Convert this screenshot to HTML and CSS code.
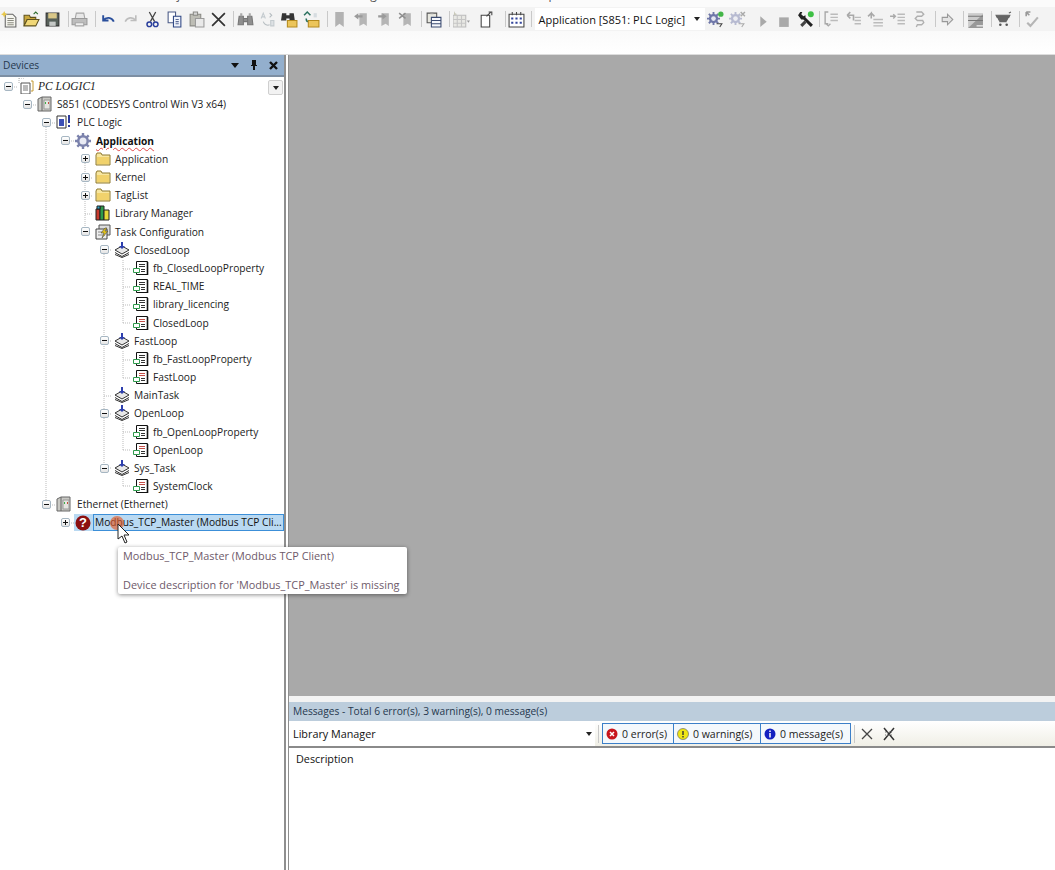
FILE: index.html
```html
<!DOCTYPE html>
<html>

<head>
    <meta charset="utf-8" />
    <title>CODESYS</title>
    <link rel="stylesheet" href="styles.css">
</head>

<body>
    <!-- icon set -->
    <svg class="defs" width="0" height="0">
        <defs>
            <symbol id="i-new" viewBox="0 0 16 16">
                <path d="M4 3h7l3 3v9H4z" fill="#f4f4ee" stroke="#666" />
                <path d="M6 7h6M6 9h6M6 11h6M6 13h6" stroke="#8a8a80" />
                <path d="M3 0l1 2 2 1-2 1-1 2-1-2-2-1 2-1z" fill="#e8c84a" />
            </symbol>
            <symbol id="i-open" viewBox="0 0 16 16">
                <path d="M1 4h5l1 2h5v2H4L1 14z" fill="#c9a73c" stroke="#5f5320" />
                <path d="M4 8h11l-3 6H1z" fill="#f0d777" stroke="#5f5320" />
                <path d="M10 3l2-2 2 2" fill="none" stroke="#2c6b2c" />
            </symbol>
            <symbol id="i-save" viewBox="0 0 16 16">
                <path d="M2 2h12v12H2z" fill="#57605a" stroke="#333" />
                <path d="M4 2h8v5H4z" fill="#d9c788" />
                <path d="M5 10h6v4H5z" fill="#c5c8c6" />
            </symbol>
            <symbol id="i-print" viewBox="0 0 16 16">
                <path d="M5 2h7l1 5H4z" fill="#e8e8e8" stroke="#a5a5a5" />
                <path d="M1 7h14v6H1z" fill="#bdbdbd" stroke="#999" />
                <path d="M4 11h8v3H4z" fill="#eee" stroke="#a5a5a5" />
            </symbol>
            <symbol id="i-undo" viewBox="0 0 16 16">
                <path d="M3 4v5h5M3 9c3-4 8-3 10 1" fill="none" stroke="#2a4f9c" stroke-width="1.800" />
            </symbol>
            <symbol id="i-redo" viewBox="0 0 16 16">
                <path d="M13 4v5H8M13 9c-3-4-8-3-10 1" fill="none" stroke="#bdbdbd" stroke-width="1.500" />
            </symbol>
            <symbol id="i-cut" viewBox="0 0 16 16">
                <path d="M5 1l5 9M11 1l-5 9" stroke="#444" stroke-width="1.200" />
                <circle cx="5" cy="12.500" r="2.200" fill="none" stroke="#2a3f9c" stroke-width="1.400" />
                <circle cx="11" cy="12.500" r="2.200" fill="none" stroke="#2a3f9c" stroke-width="1.400" />
            </symbol>
            <symbol id="i-copy" viewBox="0 0 16 16">
                <path d="M2 1h7v10H2z" fill="#fff" stroke="#4a5a86" />
                <path d="M7 5h7v10H7z" fill="#eef2fa" stroke="#2f4784" />
                <path d="M9 8h3M9 10h3M9 12h3" stroke="#5a6a96" />
            </symbol>
            <symbol id="i-paste" viewBox="0 0 16 16">
                <path d="M2 3h10v11H2z" fill="#bdbdb5" stroke="#8a8a85" />
                <path d="M5 1h4v3H5z" fill="#d5d5d5" stroke="#8a8a85" />
                <path d="M7 7h8v8H7z" fill="#e9e9e9" stroke="#9a9a9a" />
            </symbol>
            <symbol id="i-del" viewBox="0 0 16 16">
                <path d="M2 2l12 12M14 2L2 14" stroke="#333" stroke-width="1.600" />
            </symbol>
            <symbol id="i-find" viewBox="0 0 16 16">
                <path d="M2 5h4v8H1zM10 5h4l1 8h-5zM6 7h4v3H6z" fill="#8f8f8f" stroke="#777" />
                <path d="M3 2h2v3H3zM11 2h2v3h-2z" fill="#aaa" />
            </symbol>
            <symbol id="i-findnext" viewBox="0 0 16 16">
                <path d="M2 7l2-5 2 5M3 5.500h2" fill="none" stroke="#c3cace" />
                <path d="M10 2l2 2-2 2M4 10c1 3 4 4 6 3" fill="none" stroke="#b5bcc0" />
                <path d="M11 9h3v5h-3z" fill="#dde1e4" stroke="#c3cace" />
            </symbol>
            <symbol id="i-findall" viewBox="0 0 16 16">
                <path d="M1 2h4v7H0zM8 2h4l1 7H8zM5 4h3v3H5z" fill="#333" />
                <path d="M6 9h9v6H6z" fill="#ecc55a" stroke="#b58a1c" />
            </symbol>
            <symbol id="i-replace" viewBox="0 0 16 16">
                <path d="M1 4l3-3 3 3M3 7c0 2 1 3 2 3" fill="none" stroke="#29705e" stroke-width="1.400" />
                <path d="M5 9h10v6H5z" fill="#ecc55a" stroke="#b58a1c" />
                <path d="M10 2h3v4h-3z" fill="#d6dce0" />
            </symbol>
            <symbol id="i-mark" viewBox="0 0 16 16">
                <path d="M4 1h8v14l-4-3-4 3z" fill="#b2b2b2" />
            </symbol>
            <symbol id="i-markprev" viewBox="0 0 16 16">
                <path d="M6 2h7v12l-3-2-4 2z" fill="#b5b5b5" />
                <path d="M1 5l4-3v2h4v2H5v2z" fill="#9a9a9a" />
            </symbol>
            <symbol id="i-marknext" viewBox="0 0 16 16">
                <path d="M6 2h7v12l-3-2-4 2z" fill="#b5b5b5" />
                <path d="M11 5L7 2v2H3v2h4v2z" fill="#9a9a9a" />
            </symbol>
            <symbol id="i-markclear" viewBox="0 0 16 16">
                <path d="M6 2h7v12l-3-2-4 2z" fill="#b5b5b5" />
                <path d="M2 2l6 5M8 2L2 7" stroke="#8f8f8f" stroke-width="1.400" />
            </symbol>
            <symbol id="i-board" viewBox="0 0 16 16">
                <path d="M2 2h9v9H2z" fill="#e8e8e0" stroke="#555" />
                <path d="M5 1h3v2H5z" fill="#999" />
                <path d="M6 6h9v9H6z" fill="#f6f8fc" stroke="#3a4a70" />
                <path d="M6 9h9M6 12h9" stroke="#3a4a70" />
            </symbol>
            <symbol id="i-grid" viewBox="0 0 16 16">
                <path d="M0 4h12v11H0z" fill="#e8e8e4" stroke="#bbb" />
                <path d="M4 4v11M8 4v11M0 8h12M0 11.500h12" stroke="#c5c5c5" />
                <path d="M1 0l1 2 2 1-3 1z" fill="#c5c5b5" />
                <path d="M13 9h3l-1.500 2z" fill="#999" />
            </symbol>
            <symbol id="i-export" viewBox="0 0 16 16">
                <path d="M3 4h8v11H3z" fill="#fff" stroke="#444" />
                <path d="M8 5l4-4M10 1h3v3" fill="none" stroke="#444" />
            </symbol>
            <symbol id="i-cal" viewBox="0 0 16 16">
                <path d="M1 3h14v12H1z" fill="#fff" stroke="#444" />
                <path d="M4 1v3M8 1v3M12 1v3" stroke="#444" />
                <path d="M3 6h2v2H3zM7 6h2v2H7zM11 6h2v2h-2zM3 10h2v2H3zM7 10h2v2H7zM11 10h2v2h-2z" fill="#33459c" />
            </symbol>
            <symbol id="i-gear" viewBox="0 0 16 16">
                <circle cx="7" cy="7" r="5" fill="#6f77a8" />
                <path d="M7 0v14M0 7h14M2 2l10 10M12 2L2 12" stroke="#6f77a8" stroke-width="2" />
                <circle cx="7" cy="7" r="2.500" fill="#e4e6f2" />
            </symbol>
            <symbol id="i-login" viewBox="0 0 16 16">
                <use href="#i-gear" width="14" height="14" y="1" />
                <circle cx="13" cy="3" r="2.500" fill="#44b548" />
                <path d="M9 12l5 0-2 3" fill="none" stroke="#444" />
            </symbol>
            <symbol id="i-logout" viewBox="0 0 16 16">
                <g opacity=".45"><use href="#i-gear" width="14" height="14" y="1" /></g>
                <path d="M11 1l4 4M15 1l-4 4" stroke="#aaa" stroke-width="1.400" />
                <path d="M9 12l5 0-2 3" fill="none" stroke="#aaa" />
            </symbol>
            <symbol id="i-play" viewBox="0 0 16 16">
                <path d="M5 5l6 5-6 5z" fill="#a9a9a9" />
            </symbol>
            <symbol id="i-stop" viewBox="0 0 16 16">
                <path d="M3 6h9v9H3z" fill="#a9a9a9" />
            </symbol>
            <symbol id="i-tool" viewBox="0 0 16 16">
                <path d="M1 4l2-3 2 0-1 2 2 2 2-1 0 2 7 7-2 2-7-7-2 0z" fill="#222" />
                <path d="M3 13l4-4 2 2-4 4z" fill="#444" />
                <circle cx="13" cy="3" r="2.800" fill="#3fc045" />
            </symbol>
            <symbol id="i-step1" viewBox="0 0 16 16">
                <path d="M5 1H2v11h3M3 12l2 2 2-2" fill="none" stroke="#a9a9a9" stroke-width="1.300" />
                <path d="M7 3h7M7 6h7M7 9h7" stroke="#bbb" stroke-width="1.300" />
            </symbol>
            <symbol id="i-step2" viewBox="0 0 16 16">
                <path d="M2 4l3-3M2 4l3 3M2 4h6v5" fill="none" stroke="#a9a9a9" stroke-width="1.500" />
                <path d="M9 6h6M9 9h6M9 12h6" stroke="#bbb" stroke-width="1.300" />
            </symbol>
            <symbol id="i-step3" viewBox="0 0 16 16">
                <path d="M4 7V2L1 5M4 2l3 3" fill="none" stroke="#a9a9a9" stroke-width="1.500" />
                <path d="M6 8h9M6 11h9M6 14h9" stroke="#bbb" stroke-width="1.300" />
            </symbol>
            <symbol id="i-step4" viewBox="0 0 16 16">
                <path d="M1 5h5M4 3l2 2-2 2" fill="none" stroke="#a9a9a9" stroke-width="1.300" />
                <path d="M8 3h7M8 6h7M8 9h7M8 12h7" stroke="#bbb" stroke-width="1.300" />
            </symbol>
            <symbol id="i-step5" viewBox="0 0 16 16">
                <path d="M5 1h5l2 2-2 2H6L4 7l2 2h5l1 2-2 2H6l-1 2" fill="none" stroke="#b0b0b0" stroke-width="1.300" />
            </symbol>
            <symbol id="i-arrow" viewBox="0 0 16 16">
                <path d="M3 6h5V3l5 5-5 5v-3H3z" fill="#e4e4e4" stroke="#999" />
            </symbol>
            <symbol id="i-chart" viewBox="0 0 16 16">
                <path d="M1 2h14v14H1z" fill="#ccc" />
                <path d="M1 16L15 3v13z" fill="#999" />
                <path d="M1 5h14M1 9h14" stroke="#777" />
                <path d="M9 14h6" stroke="#fff" />
            </symbol>
            <symbol id="i-cart" viewBox="0 0 16 16">
                <path d="M1 4h13l-1 2H2zM3 7h9l-1 2H4zM4 10h7" fill="#666" stroke="#666" />
                <circle cx="5" cy="13" r="1.200" fill="#555" />
                <circle cx="11" cy="13" r="1.200" fill="#555" />
                <path d="M13 2l2-1" stroke="#555" />
            </symbol>
            <symbol id="i-check" viewBox="0 0 16 16">
                <path d="M3 1l3 3M3 1v4M3 1h4" fill="none" stroke="#999" stroke-width="1.500" />
                <path d="M4 11l3 3 7-8" fill="none" stroke="#b5b5b5" stroke-width="2" />
            </symbol>

            <symbol id="t-project" viewBox="0 0 16 16">
                <path d="M1 0h6M1 0v6" stroke="#aaa" stroke-dasharray="1 1" />
                <path d="M3 5h9v11H3z" fill="#fff" stroke="#555" />
                <path d="M5 8h5M5 10h5M5 12h5" stroke="#777" />
                <path d="M13 3h2v10h-2" fill="none" stroke="#c59a32" />
            </symbol>
            <symbol id="t-device" viewBox="0 0 16 16">
                <path d="M1 3l4-2h9v14H1z" fill="#c9c9c4" stroke="#666" />
                <path d="M5 1v14" stroke="#666" />
                <path d="M7 4h6v9H7z" fill="#e4e4df" stroke="#999" />
                <path d="M8 6h1v2H8z" fill="#3fae49" />
                <path d="M11 6h1v2h-1z" fill="#c84a3a" />
            </symbol>
            <symbol id="t-plc" viewBox="0 0 16 16">
                <path d="M1 2h9v12H1z" fill="#fff" stroke="#333" />
                <path d="M3 5h5v7H3z" fill="#3c4fb5" />
                <path d="M12 1h2v8h-2zM12 11h2v2h-2z" fill="#2d3c9c" />
            </symbol>
            <symbol id="t-app" viewBox="0 0 16 16">
                <circle cx="8" cy="8" r="6" fill="#7b82ac" />
                <path d="M8 0v16M0 8h16M2.300 2.300l11.400 11.400M13.700 2.300L2.300 13.700" stroke="#7b82ac" stroke-width="2.400" />
                <circle cx="8" cy="8" r="3.500" fill="#e8eaf4" />
            </symbol>
            <symbol id="t-folder" viewBox="0 0 16 16">
                <path d="M1 4l1-2h4l1 2h8v10H1z" fill="#f7e6a0" stroke="#8f7a30" />
                <path d="M2 6h12v7H2z" fill="#f1d26c" />
            </symbol>
            <symbol id="t-lib" viewBox="0 0 16 16">
                <path d="M1 4h4v11H1z" fill="#c93a2e" stroke="#222" />
                <path d="M5 1h4v14H5z" fill="#2e9c4a" stroke="#222" />
                <path d="M9 5h5v10H9z" fill="#e8d83a" stroke="#222" />
                <path d="M2 1h3v3H2z" fill="#2ea6c9" stroke="#222" />
            </symbol>
            <symbol id="t-tasks" viewBox="0 0 16 16">
                <path d="M4 1h11v10H4z" fill="#ddd" stroke="#555" />
                <path d="M1 5h11v10H1z" fill="#eee" stroke="#444" />
                <path d="M3 8h7M3 11h7" stroke="#8a8a8a" />
                <path d="M10 4l-4 5h3l-2 5 6-7h-3l2-3z" fill="#e2c21c" stroke="#444" stroke-width=".6" />
            </symbol>
            <symbol id="t-task" viewBox="0 0 16 16">
                <path d="M1 8l7-4 7 4-7 4z" fill="#e8e8e8" stroke="#333" />
                <path d="M1 10.500l7 4 7-4M1 12.500l7 3 7-3" fill="none" stroke="#333" />
                <path d="M7 0h2v4h2L8 7 5 4h2z" fill="#2d3fae" />
            </symbol>
            <symbol id="t-pou" viewBox="0 0 16 16">
                <path d="M3.500 1.500h11v13h-11z" fill="#fff" stroke="#111" />
                <path d="M14.500 2v13" stroke="#111" stroke-width="1.600" />
                <path d="M6 4.500h6M6 6.500h6M8 9.500h4M8 11.500h4" stroke="#333" />
                <path d="M.5 8.500h6v4h-6z" fill="#fff" stroke="#2f9a4c" />
            </symbol>
            <symbol id="t-pouerr" viewBox="0 0 16 16">
                <path d="M3.500 1.500h11v13h-11z" fill="#fff" stroke="#111" />
                <path d="M14.500 2v13" stroke="#111" stroke-width="1.600" />
                <path d="M6 4.500h6M6 6.500h6" stroke="#c4504a" />
                <path d="M8 9.500h4M8 11.500h4" stroke="#333" />
                <path d="M.5 8.500h6v4h-6z" fill="#fff" stroke="#2f9a4c" />
            </symbol>
        </defs>
    </svg>

    <!-- 菜单和工具栏 -->
    <div class="menu">
        <span>File</span><span>Edit</span><span>View</span><span>Project</span><span>Build</span><span>Online</span><span>Debug</span><span>Tools</span><span>Window</span><span>Help</span>
    </div>
    <div class="toolbar">
        <div class="group g-first">
            <span class="btn"><svg><use href="#i-new" /></svg></span>
            <span class="btn"><svg><use href="#i-open" /></svg></span>
            <span class="btn"><svg><use href="#i-save" /></svg></span>
        </div>
        <i class="sep m4"></i>
        <span class="btn"><svg><use href="#i-print" /></svg></span>
        <i class="sep m4"></i>
        <div class="group m2">
            <span class="btn"><svg><use href="#i-undo" /></svg></span>
            <span class="btn"><svg><use href="#i-redo" /></svg></span>
            <span class="btn"><svg><use href="#i-cut" /></svg></span>
            <span class="btn"><svg><use href="#i-copy" /></svg></span>
            <span class="btn"><svg><use href="#i-paste" /></svg></span>
            <span class="btn"><svg><use href="#i-del" /></svg></span>
        </div>
        <i class="sep m3"></i>
        <div class="group m1">
            <span class="btn"><svg><use href="#i-find" /></svg></span>
            <span class="btn"><svg><use href="#i-findnext" /></svg></span>
            <span class="btn"><svg><use href="#i-findall" /></svg></span>
            <span class="btn"><svg><use href="#i-replace" /></svg></span>
        </div>
        <i class="sep m4"></i>
        <div class="group m1">
            <span class="btn"><svg><use href="#i-mark" /></svg></span>
            <span class="btn"><svg><use href="#i-markprev" /></svg></span>
            <span class="btn"><svg><use href="#i-marknext" /></svg></span>
            <span class="btn"><svg><use href="#i-markclear" /></svg></span>
        </div>
        <i class="sep m4"></i>
        <span class="btn m1"><svg><use href="#i-board" /></svg></span>
        <i class="sep m4"></i>
        <span class="btn m1"><svg><use href="#i-grid" /></svg></span>
        <span class="btn wide"><svg><use href="#i-export" /></svg></span>
        <i class="sep m4"></i>
        <span class="btn"><svg><use href="#i-cal" /></svg></span>
        <i class="sep m3"></i>
        <div class="combo m3"><span>Application [S851: PLC Logic]</span><i class="arrow"></i></div>
        <span class="btn"><svg><use href="#i-login" /></svg></span>
        <span class="btn"><svg><use href="#i-logout" /></svg></span>
        <div class="group m4 g-run">
            <span class="btn"><svg><use href="#i-play" /></svg></span>
            <span class="btn"><svg><use href="#i-stop" /></svg></span>
            <span class="btn"><svg><use href="#i-tool" /></svg></span>
        </div>
        <i class="sep m3"></i>
        <div class="group m1">
            <span class="btn"><svg><use href="#i-step1" /></svg></span>
            <span class="btn"><svg><use href="#i-step2" /></svg></span>
            <span class="btn"><svg><use href="#i-step3" /></svg></span>
            <span class="btn"><svg><use href="#i-step4" /></svg></span>
            <span class="btn"><svg><use href="#i-step5" /></svg></span>
        </div>
        <i class="sep m4"></i>
        <span class="btn m1"><svg><use href="#i-arrow" /></svg></span>
        <i class="sep m4"></i>
        <span class="btn m1"><svg><use href="#i-chart" /></svg></span>
        <i class="sep m4"></i>
        <span class="btn m1"><svg><use href="#i-cart" /></svg></span>
        <i class="sep m4"></i>
        <span class="btn m1"><svg><use href="#i-check" /></svg></span>
    </div>
    <div class="toolstrip"></div>

    <div class="main">
        <!-- 设备面板 -->
        <div class="devices">
            <div class="pane-head">
                <span>Devices</span>
                <span class="pane-tools">
                    <svg width="10" height="10" viewBox="0 0 10 10"><path d="M1 3h8L5 8z" fill="#111" /></svg>
                    <svg width="10" height="12" viewBox="0 0 10 12"><path d="M3 1h4v5h1v1H6v4H4V7H2V6h1z" fill="#111" /></svg>
                    <svg width="11" height="11" viewBox="0 0 11 11"><path d="M2 2l7 7M9 2l-7 7" stroke="#111" stroke-width="2.400" /></svg>
                </span>
            </div>
            <div class="tree">
                <!-- 树的虚线 -->
                <svg class="tree-lines" width="284" height="470">
                    <path d="M8 10h10M27 28h10M46 46v384M46 46h10M46 428h10M65 446h10M65 64h10M85 82v74M85 101h8M85 119h8M85 137h8M104 173v218M104 173h8M104 264h8M104 319h8M104 337h8M104 391h8M123 183v63M123 192h8M123 210h8M123 228h8M123 246h8M123 274v27M123 283h8M123 301h8M123 346v27M123 355h8M123 373h8M123 400v9M123 409h8"
                        fill="none" stroke="#bbb" stroke-dasharray="1 1" />
                </svg>
                <div class="row l0"><i class="tog minus"></i><svg class="ico"><use href="#t-project" /></svg><span class="lbl it">PC LOGIC1</span></div>
                <div class="row l1"><i class="tog minus"></i><svg class="ico"><use href="#t-device" /></svg><span class="lbl">S851 (CODESYS Control Win V3 x64)</span></div>
                <div class="row l2"><i class="tog minus"></i><svg class="ico"><use href="#t-plc" /></svg><span class="lbl">PLC Logic</span></div>
                <div class="row l3"><i class="tog minus"></i><svg class="ico"><use href="#t-app" /></svg><span class="lbl bold">Application</span></div>
                <div class="row l4"><i class="tog plus"></i><svg class="ico"><use href="#t-folder" /></svg><span class="lbl">Application</span></div>
                <div class="row l4"><i class="tog plus"></i><svg class="ico"><use href="#t-folder" /></svg><span class="lbl">Kernel</span></div>
                <div class="row l4"><i class="tog plus"></i><svg class="ico"><use href="#t-folder" /></svg><span class="lbl">TagList</span></div>
                <div class="row l4"><i class="tog none"></i><svg class="ico"><use href="#t-lib" /></svg><span class="lbl">Library Manager</span></div>
                <div class="row l4"><i class="tog minus"></i><svg class="ico"><use href="#t-tasks" /></svg><span class="lbl">Task Configuration</span></div>
                <div class="row l5"><i class="tog minus"></i><svg class="ico"><use href="#t-task" /></svg><span class="lbl">ClosedLoop</span></div>
                <div class="row l6"><i class="tog none"></i><svg class="ico"><use href="#t-pou" /></svg><span class="lbl">fb_ClosedLoopProperty</span></div>
                <div class="row l6"><i class="tog none"></i><svg class="ico"><use href="#t-pou" /></svg><span class="lbl">REAL_TIME</span></div>
                <div class="row l6"><i class="tog none"></i><svg class="ico"><use href="#t-pou" /></svg><span class="lbl">library_licencing</span></div>
                <div class="row l6"><i class="tog none"></i><svg class="ico"><use href="#t-pouerr" /></svg><span class="lbl">ClosedLoop</span></div>
                <div class="row l5"><i class="tog minus"></i><svg class="ico"><use href="#t-task" /></svg><span class="lbl">FastLoop</span></div>
                <div class="row l6"><i class="tog none"></i><svg class="ico"><use href="#t-pou" /></svg><span class="lbl">fb_FastLoopProperty</span></div>
                <div class="row l6"><i class="tog none"></i><svg class="ico"><use href="#t-pouerr" /></svg><span class="lbl">FastLoop</span></div>
                <div class="row l5"><i class="tog none"></i><svg class="ico"><use href="#t-task" /></svg><span class="lbl">MainTask</span></div>
                <div class="row l5"><i class="tog minus"></i><svg class="ico"><use href="#t-task" /></svg><span class="lbl">OpenLoop</span></div>
                <div class="row l6"><i class="tog none"></i><svg class="ico"><use href="#t-pou" /></svg><span class="lbl">fb_OpenLoopProperty</span></div>
                <div class="row l6"><i class="tog none"></i><svg class="ico"><use href="#t-pouerr" /></svg><span class="lbl">OpenLoop</span></div>
                <div class="row l5"><i class="tog minus"></i><svg class="ico"><use href="#t-task" /></svg><span class="lbl">Sys_Task</span></div>
                <div class="row l6"><i class="tog none"></i><svg class="ico"><use href="#t-pouerr" /></svg><span class="lbl">SystemClock</span></div>
                <div class="row l2"><i class="tog minus"></i><svg class="ico"><use href="#t-device" /></svg><span class="lbl">Ethernet (Ethernet)</span></div>
                <div class="row l3 selected">
                    <i class="tog plus"></i>
                    <span class="sel-ico"><svg width="16" height="16" viewBox="0 0 16 16"><circle cx="8" cy="8" r="7.500" fill="#8c1010" /><text class="q" x="8" y="12" text-anchor="middle">?</text></svg></span>
                    <span class="lbl sel-lbl">Modbus_TCP_Master (Modbus TCP Cli...</span>
                </div>
                <button class="tree-drop"><i class="arrow"></i></button>
            </div>
        </div>

        <!-- 右侧 -->
        <div class="right">
            <div class="editor"></div>
            <div class="messages">
                <div class="msg-head">Messages - Total 6 error(s), 3 warning(s), 0 message(s)</div>
                <div class="msg-bar">
                    <div class="msg-combo"><span>Library Manager</span><i class="arrow"></i></div>
                    <i class="sep m-bar"></i>
                    <div class="filter f-err">
                        <svg width="12" height="12" viewBox="0 0 12 12"><circle cx="6" cy="6" r="5.500" fill="#c8141c" /><path d="M4 4l4 4M8 4l-4 4" stroke="#fff" stroke-width="1.500" /></svg>
                        0 error(s)
                    </div>
                    <div class="filter f-warn">
                        <svg width="12" height="12" viewBox="0 0 12 12"><circle cx="6" cy="6" r="5.500" fill="#f0e614" stroke="#555" stroke-width=".6" /><path d="M6 3v4M6 8v1.500" stroke="#333" stroke-width="1.400" /></svg>
                        0 warning(s)
                    </div>
                    <div class="filter f-msg">
                        <svg width="12" height="12" viewBox="0 0 12 12"><circle cx="6" cy="6" r="5.500" fill="#1420c0" /><path d="M6 2.500v1.500M6 5v4.500" stroke="#fff" stroke-width="1.500" /></svg>
                        0 message(s)
                    </div>
                    <i class="sep m-bar"></i>
                    <svg class="bar-ico" width="14" height="14" viewBox="0 0 14 14"><path d="M2 2l10 10M12 2L2 12" stroke="#444" stroke-width="1.300" /></svg>
                    <svg class="bar-ico" width="14" height="14" viewBox="0 0 14 14"><path d="M2 1l10 12M12 1L2 13" stroke="#333" stroke-width="1.500" /><path d="M3 5h8M3 8h8" stroke="#777" stroke-dasharray="1 1" /></svg>
                </div>
                <div class="msg-list">Description</div>
            </div>
        </div>
    </div>

    <!-- 提示框和鼠标 -->
    <div class="tooltip">
        <div>Modbus_TCP_Master (Modbus TCP Client)</div>
        <div class="tip-gap">Device description for 'Modbus_TCP_Master' is missing</div>
    </div>
    <div class="hotspot"></div>
    <svg class="cursor" width="14" height="21" viewBox="0 0 14 21"><path d="M1 1v15l4-3 3 7 2-1-3-7h5z" fill="#fff" stroke="#222" /></svg>
</body>

</html>
```

FILE: styles.css
```css
* {
    padding: 0;
    margin: 0;
    border: 0;
    box-sizing: border-box;
}

body {
    width: 1055px;
    height: 870px;
    overflow: hidden;
    position: relative;
    background-color: #ffffff;
    font-family: "Open Sans", "DejaVu Sans", sans-serif;
    font-size: 10.200px;
    color: #222222;
}

.defs {
    position: absolute;
}

/* 菜单，只露出字的下半部分 */
.menu {
    height: 7px;
    background-color: #fbfbfb;
    overflow: hidden;
    display: flex;
    gap: 26px;
    padding-left: 13px;
    font-size: 12px;
    line-height: 16px;
}

.menu span {
    flex: none;
    margin-top: -13px;
    color: #555555;
}

/* 工具栏 */
.toolbar {
    height: 24px;
    background-color: #f3f3f3;
    display: flex;
    align-items: center;
}

.toolstrip {
    height: 24px;
    background: linear-gradient(#fafafa, #ffffff);
    border-bottom: 1px solid #dddddd;
}

.group {
    display: flex;
    flex: none;
}

.g-first {
    margin-left: -1px;
}

.g-first .btn {
    width: 21.500px;
}

.g-run .btn {
    width: 21px;
}

.btn {
    flex: none;
    width: 22px;
    height: 20px;
    display: flex;
    align-items: center;
    justify-content: center;
}

.btn svg {
    width: 17px;
    height: 17px;
}

.btn.wide {
    width: 28px;
}

.sep {
    flex: none;
    width: 1px;
    height: 16px;
    background-color: #c9c9c9;
}

.m1 {
    margin-left: 1px;
}

.m2 {
    margin-left: 2px;
}

.m3 {
    margin-left: 3px;
}

.m4 {
    margin-left: 4px;
}

.combo {
    flex: none;
    width: 170px;
    height: 22px;
    padding: 0 5px 0 4px;
    background-color: #ffffff;
    display: flex;
    align-items: center;
    justify-content: space-between;
    font-size: 11px;
    color: #111111;
    white-space: nowrap;
}

.arrow {
    flex: none;
    display: block;
    width: 0;
    height: 0;
    border-left: 3px solid transparent;
    border-right: 3px solid transparent;
    border-top: 4px solid #222222;
}

/* 主区域 */
.main {
    height: 815px;
    display: flex;
}

.devices {
    flex: none;
    width: 286px;
    border-right: 2px solid #8f8f8f;
    display: flex;
    flex-direction: column;
}

.pane-head {
    height: 22px;
    padding: 0 5px 0 3px;
    background-color: #93afcd;
    border-bottom: 2px solid #7d8fa3;
    display: flex;
    align-items: center;
    justify-content: space-between;
    color: #26384e;
}

.pane-tools {
    display: flex;
    align-items: center;
    gap: 9px;
}

.tree {
    position: relative;
    flex: 1;
}

/* 树的虚线，压在行下面 */
.tree-lines {
    position: absolute;
    left: 0;
    top: 0;
}

.row {
    position: relative;
    height: 18.200px;
    display: flex;
    align-items: center;
    white-space: nowrap;
}

.l0 {
    padding-left: 4px;
}

.l1 {
    padding-left: 23px;
}

.l2 {
    padding-left: 42px;
}

.l3 {
    padding-left: 61px;
}

.l4 {
    padding-left: 81px;
}

.l5 {
    padding-left: 100px;
}

.l6 {
    padding-left: 119px;
}

.tog {
    flex: none;
    position: relative;
    width: 9px;
    height: 9px;
    margin-right: 5px;
    border: 1px solid #a6b6c2;
    border-radius: 2px;
    background: linear-gradient(#ffffff, #e4e4e4);
}

.tog.none {
    visibility: hidden;
}

.tog::before {
    content: "";
    position: absolute;
    left: 1px;
    top: 3px;
    width: 5px;
    height: 1px;
    background-color: #111111;
}

.tog.plus::after {
    content: "";
    position: absolute;
    left: 3px;
    top: 1px;
    width: 1px;
    height: 5px;
    background-color: #111111;
}

.ico {
    flex: none;
    width: 16px;
    height: 16px;
    margin-right: 4px;
}

.l2 .ico,
.l3 .ico {
    margin-right: 5px;
}

.lbl {
    color: #222222;
}

.lbl.it {
    font-family: "Liberation Serif", serif;
    font-style: italic;
    font-size: 11.500px;
}

.lbl.bold {
    font-weight: bold;
    color: #111111;
    text-decoration: underline wavy #e04848 1px;
    text-underline-offset: 2px;
}

.selected {
    height: 18px;
}

.sel-ico {
    flex: none;
    width: 19px;
    height: 17px;
    margin-left: -1px;
    padding-right: 2px;
    display: flex;
    align-items: center;
    justify-content: center;
    background-color: #b9d9f2;
}

.sel-lbl {
    flex: 1;
    min-width: 0;
    overflow: hidden;
    height: 17px;
    line-height: 15px;
    padding-left: 1px;
    background-color: #b9d9f2;
    border: 1px solid #3c8fd8;
    color: #111111;
}

.q {
    font-family: "Liberation Sans", sans-serif;
    font-size: 13px;
    font-weight: bold;
    fill: #ffffff;
}

.tree-drop {
    position: absolute;
    right: 1px;
    top: 3px;
    width: 15px;
    height: 15px;
    display: flex;
    align-items: center;
    justify-content: center;
    background-color: #f2f2f2;
    border: 1px solid #cfcfcf;
    border-radius: 2px;
}

/* 右侧 */
.right {
    flex: 1;
    margin-left: 2px;
    border-left: 1px solid #8f8f8f;
    display: flex;
    flex-direction: column;
}

.editor {
    height: 641px;
    background-color: #a9a9a9;
}

.messages {
    flex: 1;
    display: flex;
    flex-direction: column;
    padding-top: 6px;
    background-color: #f3f3f3;
}

.msg-head {
    height: 19px;
    line-height: 19px;
    padding-left: 4px;
    background-color: #bccddc;
    color: #26384e;
}

.msg-bar {
    height: 25px;
    display: flex;
    align-items: center;
    background: linear-gradient(#ffffff, #f0efe6);
}

.msg-combo {
    flex: none;
    width: 306px;
    height: 25px;
    padding: 0 3px 0 4px;
    background-color: #ffffff;
    display: flex;
    align-items: center;
    justify-content: space-between;
    color: #111111;
    font-size: 10.800px;
}

.m-bar {
    margin: 0 3px;
    height: 18px;
}

.filter {
    flex: none;
    height: 21px;
    padding: 0 0 0 3px;
    display: flex;
    align-items: center;
    gap: 4px;
    background-color: #f4f8fc;
    border: 1px solid #3c7fc8;
    font-size: 10.500px;
    white-space: nowrap;
}

.f-err {
    width: 72px;
}

.f-warn {
    width: 88px;
    margin-left: -1px;
}

.f-msg {
    width: 91px;
    margin-left: -1px;
}

.bar-ico {
    flex: none;
    margin-left: 2px;
    margin-right: 6px;
}

.msg-list {
    flex: 1;
    padding: 3px 7px;
    background-color: #ffffff;
    border-top: 2px solid #8a8a8a;
    font-size: 10.800px;
    color: #111111;
}

/* 提示框 */
.tooltip {
    position: absolute;
    left: 118px;
    top: 547px;
    width: 289px;
    height: 47px;
    padding: 1px 5px;
    background-color: #ffffff;
    border-radius: 2px;
    box-shadow: 0 1px 4px rgba(0, 0, 0, 0.45);
    color: #6e5a6a;
    font-size: 10.900px;
    line-height: 15px;
    white-space: nowrap;
}

.tip-gap {
    margin-top: 14px;
}

.hotspot {
    position: absolute;
    left: 110px;
    top: 516px;
    width: 14px;
    height: 14px;
    border-radius: 50%;
    background-color: rgba(226, 90, 40, 0.65);
}

.cursor {
    position: absolute;
    left: 117px;
    top: 523px;
}
```
